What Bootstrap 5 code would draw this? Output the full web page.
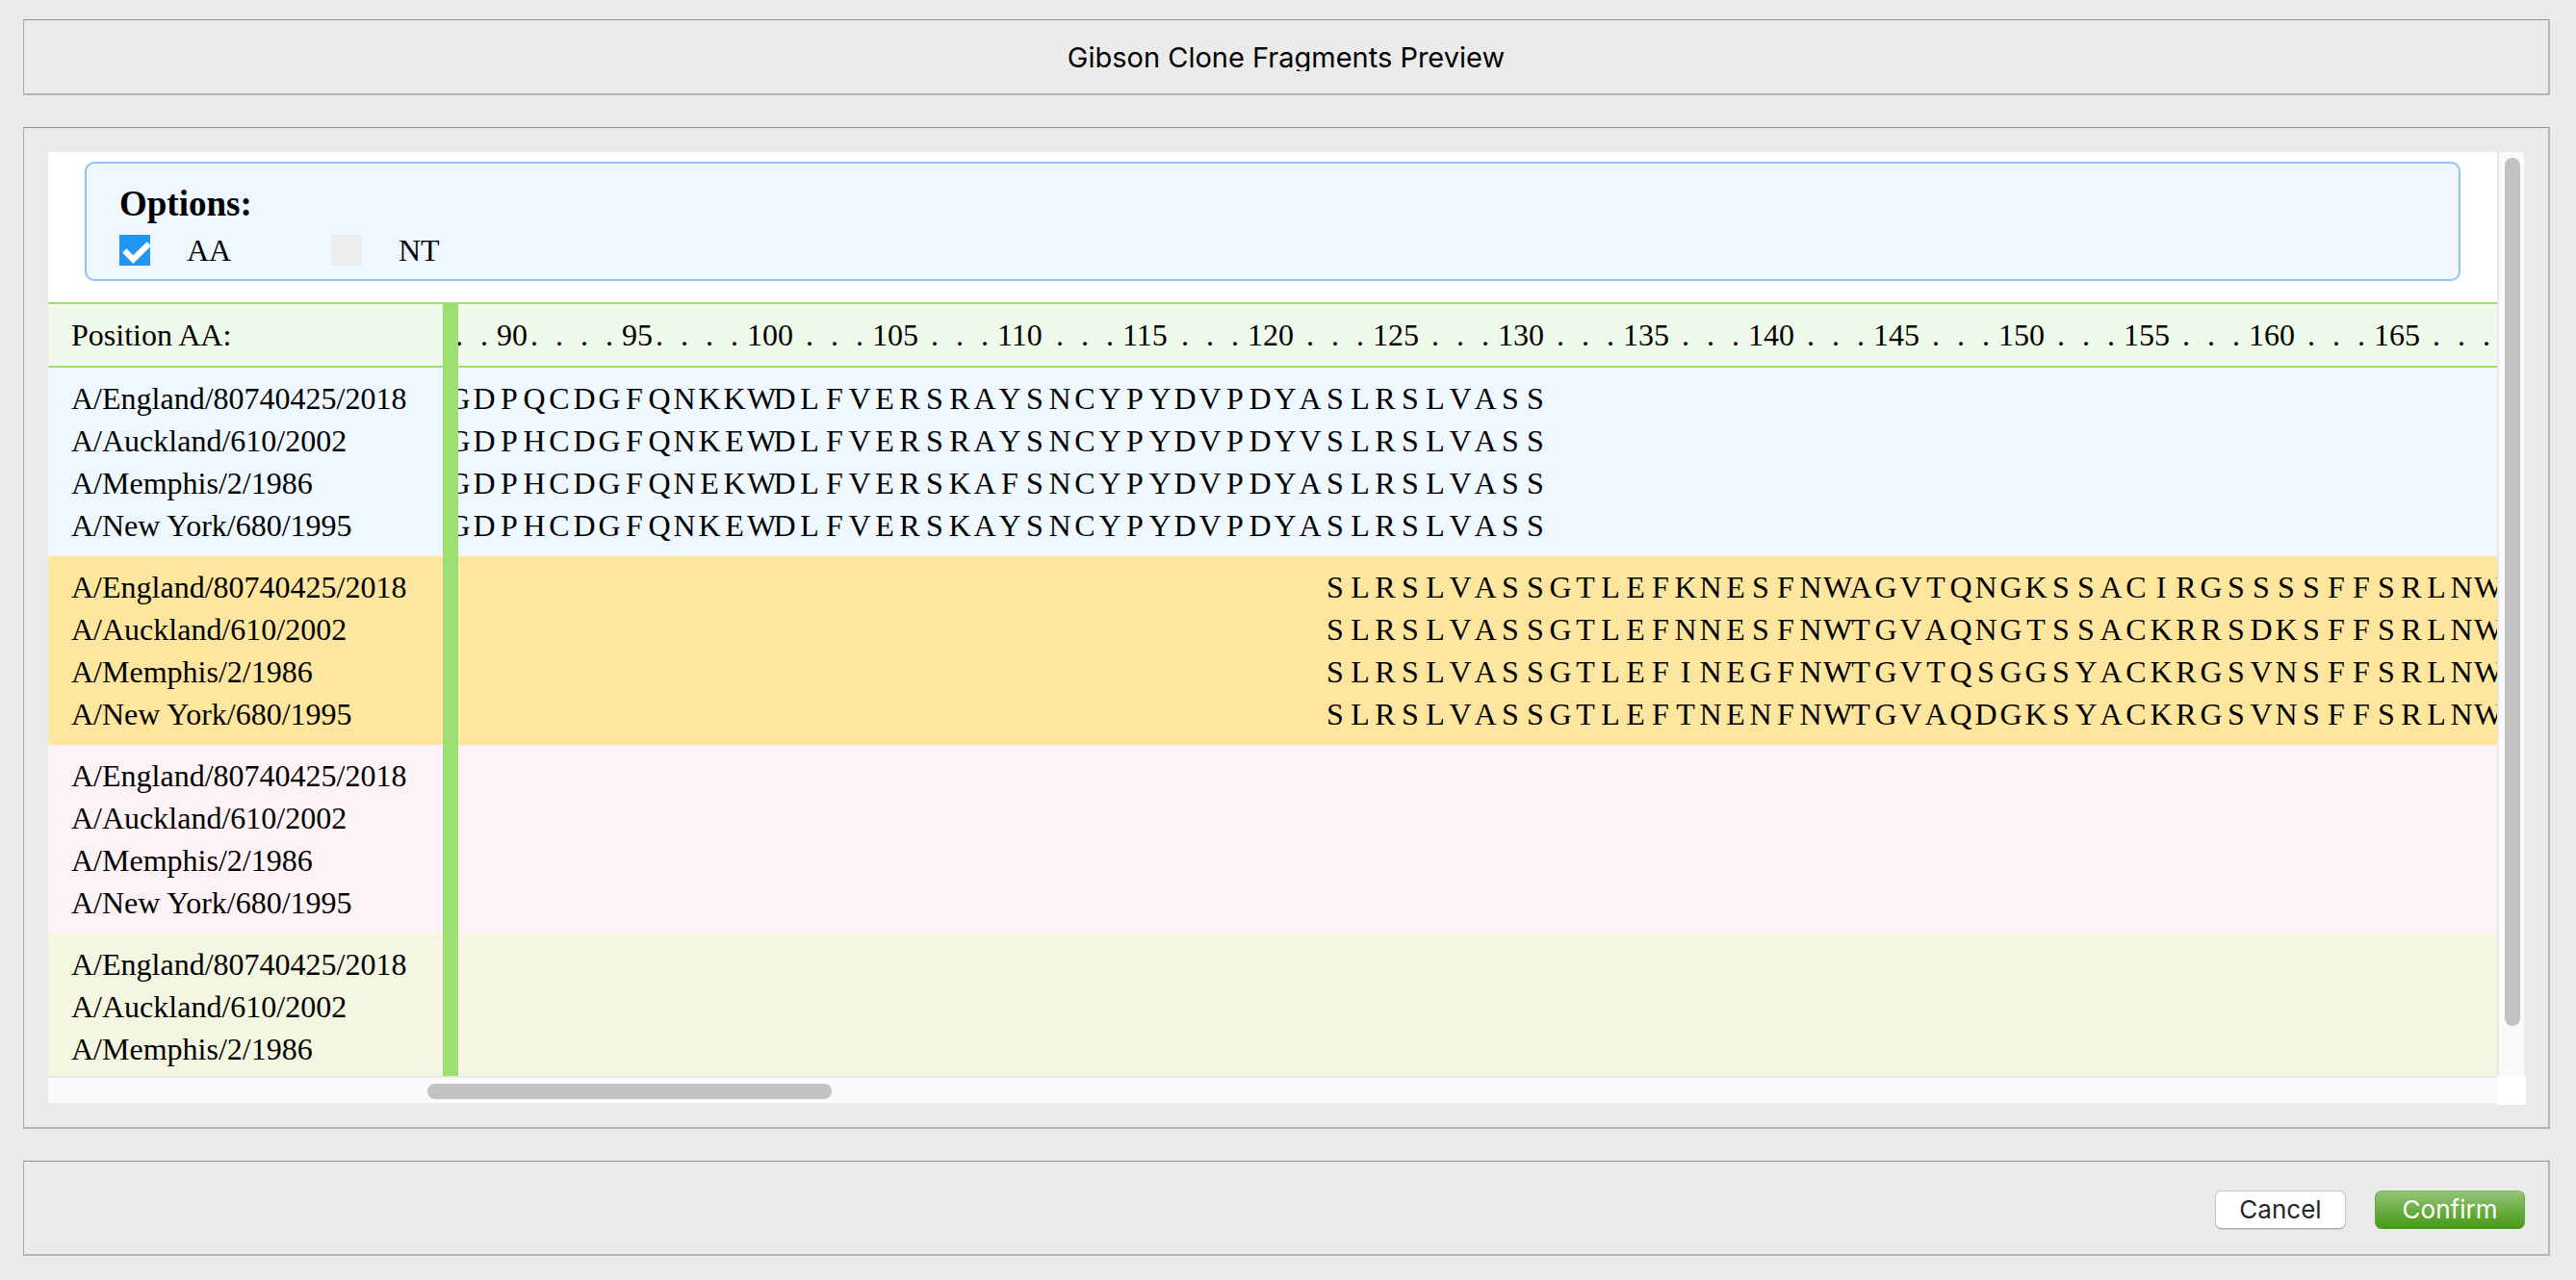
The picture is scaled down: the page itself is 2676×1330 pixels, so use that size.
<!DOCTYPE html>
<html lang="en">
<head>
<meta charset="utf-8">
<meta name="viewport" content="width=device-width, initial-scale=1">
<title>Gibson Clone Fragments Preview</title>
<link href="https://cdn.jsdelivr.net/npm/bootstrap@5.3.0/dist/css/bootstrap.min.css" rel="stylesheet">
<style>
  body { background: #ebebeb; color: #000; font-family: Inter, "Liberation Sans", sans-serif; }
  .dialog-page { padding: 20px 27px 25px 24px; gap: 33px; }
  .pane { border: solid; border-width: 1px 2px 2px 1px; border-color: #909090 #b5b5b5 #b5b5b5 #aaa; }
  .pane-title { padding: 24px 24px 23px; }
  .pane-title h1 { font-size: 29px; line-height: 29px; }
  .pane-view { padding: 25px 23px 23px 25px; }
  .pane-actions { padding: 30px 24px 26px; gap: 30px; }

  .viewer { display: grid; grid-template: minmax(0, 1fr) 30px / minmax(0, 1fr) 30px; }
  .sheet { font-family: "Liberation Serif", serif; font-size: 32px; line-height: 44px; }
  .options { margin: 10px 38px 22px; padding: 20px 34px 8px; background: #eff7ff; border: 2px solid #97bff0; border-radius: 10px; }
  .options legend { font-size: 37px; line-height: 44px; font-weight: 700; }
  .option-row { clear: both; padding-top: 4px; }
  .option { width: 220px; gap: 38px; }
  .tick { appearance: none; width: 32px; height: 32px; background: #eee; }
  .tick:checked { background: #2196f3 url("data:image/svg+xml,%3Csvg xmlns='http://www.w3.org/2000/svg' viewBox='0 0 32 32'%3E%3Cpath fill='white' d='M3.2 18.5 7.3 14.3 14.3 21.3 28.7 7.2 33 11.4 14.3 30z'/%3E%3C/svg%3E"); }

  .alignment { table-layout: fixed; border-collapse: separate; border-spacing: 0; }
  .alignment th, .alignment td { padding: 0; font-weight: 400; overflow: hidden; white-space: nowrap; }
  .alignment .name-col { width: 426px; }
  .alignment .name { padding-left: 24px; border-right: 16px solid #9be070; }
  .alignment thead > tr > * { background: #f0faea; border-top: 2px solid #9be070; border-bottom: 2px solid #9be070; }
  .alignment tr:first-child > * { padding-top: 10px; }
  .alignment tr:last-child > * { padding-bottom: 10px; }
  .fragment-blue { background: #eff7ff; }
  .fragment-gold { background: #ffe69e; }
  .fragment-pink { background: #fdf2f6; }
  .fragment-olive { background: #f5f6e1; }
  /* the strip is scrolled part of a residue to the left */
  .strip { display: flex; height: 44px; margin-left: -12px; }
  .strip > * { flex: 0 0 26px; min-width: 0; }
  .residue { display: flex; justify-content: safe center; }
  .strip > .wide { flex-basis: 52px; }

  .track-v { background: #fafafa; border-left: 2px solid #e8e8e8; margin-right: 2px; padding: 6px 4px 0 6px; }
  .track-h { background: #fafafa; border-top: 2px solid #e8e8e8; margin-bottom: 2px; padding-top: 6px; }
  .corner { background: #fff; }
  .thumb { background: #c2c2c2; border-radius: 8px; }
  .track-v .thumb { height: 94.6%; width: 16px; }
  .track-h .thumb { height: 16px; width: 16.5%; margin-left: 15.5%; }

  .dlg-btn { height: 40px; border-radius: 7px; font-size: 26px; line-height: 38px; padding: 0; border: 1px solid #c4c4c4; }
  .dlg-cancel { width: 136px; background: #fff; color: #262626; border-bottom-color: #aaa; box-shadow: 0 1px 1px #d0d0d0; }
  .dlg-confirm { width: 156px; color: #fff; background: linear-gradient(#93c377, #459a14); border-color: #7eb65d #62aa3a #459a14; }
</style>
<script src="https://cdn.jsdelivr.net/npm/bootstrap@5.3.0/dist/js/bootstrap.bundle.min.js" defer></script>
</head>
<body>
<div class="dialog-page d-flex flex-column vh-100">
  <header class="pane pane-title text-center">
    <h1 class="m-0 fw-normal overflow-hidden">Gibson Clone Fragments Preview</h1>
  </header>

  <main class="pane pane-view d-flex flex-grow-1 overflow-hidden">
    <div class="viewer flex-grow-1">
      <div class="sheet bg-white overflow-hidden">
        <fieldset class="options">
          <legend class="m-0 float-start w-100">Options:</legend>
          <div class="option-row d-flex">
            <div class="option d-flex align-items-center">
              <input class="tick" type="checkbox" id="show-aa" checked>
              <label for="show-aa">AA</label>
            </div>
            <div class="option d-flex align-items-center">
              <input class="tick" type="checkbox" id="show-nt">
              <label for="show-nt">NT</label>
            </div>
          </div>
        </fieldset>
        <table class="alignment w-100" id="alignment">
          <colgroup><col class="name-col"><col></colgroup>
          <thead>
            <tr><th class="name" scope="col">Position AA:</th><td><div class="strip" id="ruler"></div></td></tr>
          </thead>
        </table>
      </div>
      <div class="track-v"><div class="thumb"></div></div>
      <div class="track-h"><div class="thumb"></div></div>
      <div class="corner"></div>
    </div>
  </main>

  <footer class="pane pane-actions d-flex justify-content-end">
    <button type="button" class="btn dlg-btn dlg-cancel">Cancel</button>
    <button type="button" class="btn dlg-btn dlg-confirm">Confirm</button>
  </footer>
</div>

<script>
  const FIRST = 88, LAST = 169;
  const names = ['A/England/80740425/2018', 'A/Auckland/610/2002', 'A/Memphis/2/1986', 'A/New York/680/1995'];
  const fragments = [
    { tone: 'blue', start: 88, rows: [
      'GDPQCDGFQNKKWDLFVERSRAYSNCYPYDVPDYASLRSLVASS',
      'GDPHCDGFQNKEWDLFVERSRAYSNCYPYDVPDYVSLRSLVASS',
      'GDPHCDGFQNEKWDLFVERSKAFSNCYPYDVPDYASLRSLVASS',
      'GDPHCDGFQNKEWDLFVERSKAYSNCYPYDVPDYASLRSLVASS'] },
    { tone: 'gold', start: 123, rows: [
      'SLRSLVASSGTLEFKNESFNWAGVTQNGKSSACIRGSSSSFFSRLNW',
      'SLRSLVASSGTLEFNNESFNWTGVAQNGTSSACKRRSDKSFFSRLNW',
      'SLRSLVASSGTLEFINEGFNWTGVTQSGGSYACKRGSVNSFFSRLNW',
      'SLRSLVASSGTLEFTNENFNWTGVAQDGKSYACKRGSVNSFFSRLNW'] },
    { tone: 'pink', start: FIRST, rows: ['', '', '', ''] },
    { tone: 'olive', start: FIRST, rows: ['', '', '', ''] }
  ];
  const cell = (text, cls = 'residue') => `<span class="${cls}">${text}</span>`;

  let ruler = '';
  for (let p = FIRST; p <= LAST; p++) {
    if (p % 5) { ruler += cell('.'); continue; }
    // three-digit numbers take the room of two residues
    ruler += cell(p, p > 99 ? 'mark-number wide' : 'mark-number');
    if (p > 99) p++;
  }
  document.getElementById('ruler').innerHTML = ruler;

  document.getElementById('alignment').insertAdjacentHTML('beforeend', fragments.map(f =>
    `<tbody class="fragment-${f.tone}">` + f.rows.map((seq, i) =>
      `<tr><th class="name" scope="row">${names[i]}</th><td><div class="strip">` +
      (seq ? cell('').repeat(f.start - FIRST) + [...seq].map(c => cell(c)).join('') : '') +
      '</div></td></tr>').join('') + '</tbody>').join(''));
</script>
</body>
</html>
